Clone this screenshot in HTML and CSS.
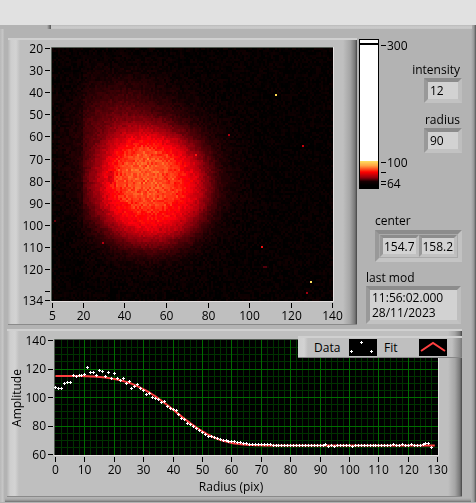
FILE: index.html
```html
<!DOCTYPE html>
<html lang="en">
<head>
<meta charset="utf-8">
<title>Beam profile</title>
<link rel="stylesheet" href="styles.css">
</head>
<body>
<header class="titlebar"></header>
<main class="window">
  <div class="tabs"><span class="tab"></span><span class="tab-edge"></span></div>
  <div class="upper">
    <section class="panel" aria-label="Intensity graph">
      <svg class="graph" id="map" viewBox="0 2 349 284">
        <foreignObject x="44" y="10" width="281" height="253"><canvas id="heat" class="heat" width="136" height="115"></canvas></foreignObject>
        <path class="frame-dark" d="M43.500 263V9.500H325"/>
        <path class="frame-light" d="M43 263.500H325.500V9"/>
      </svg>
    </section>
    <div class="side">
      <div class="side-top">
        <svg class="ramp" viewBox="0 0 48 152" width="48" height="152">
          <defs>
            <linearGradient id="rampfill" x1="0" y1="0" x2="0" y2="1">
              <stop offset="0" stop-color="#ffe060"/>
              <stop offset=".2" stop-color="#ffa040"/>
              <stop offset=".36" stop-color="#ff4018"/>
              <stop offset=".46" stop-color="#ff0000"/>
              <stop offset=".68" stop-color="#98000c"/>
              <stop offset=".85" stop-color="#180002"/>
              <stop offset="1" stop-color="#000"/>
            </linearGradient>
          </defs>
          <rect width="20" height="150" y="1"/>
          <rect x="1" y="2" width="18" height="122" fill="#fff"/>
          <rect x="1" y="5" width="18" height="2"/>
          <rect x="1" y="123" width="18" height="24" fill="url(#rampfill)"/>
          <path class="tick" d="M22 7.500h5M22 124.500h5M22 134.500h5M22 143.500h5M22 146.500h5"/>
          <text x="28" y="12">300</text>
          <text x="28" y="129">100</text>
          <text x="28" y="150">64</text>
        </svg>
        <div class="fields">
          <div class="field"><label for="intensity">intensity</label><input class="box small" id="intensity" value="12" readonly></div>
          <div class="field"><label for="radius">radius</label><input class="box small" id="radius" value="90" readonly></div>
        </div>
      </div>
      <div class="group center">
        <label for="cx">center</label>
        <div class="pair">
          <input class="box coord" id="cx" value="154.78" readonly>
          <input class="box coord" id="cy" aria-label="center y" value="158.2" readonly>
        </div>
      </div>
      <div class="group modified">
        <label for="mod">last mod</label>
        <textarea class="box stamp" id="mod" rows="2" readonly>11:56:02.000
28/11/2023</textarea>
      </div>
    </div>
  </div>
  <section class="panel lower" aria-label="Radial profile">
    <svg class="graph" id="profile" viewBox="0 0 455 165"></svg>
    <div class="legend">
      <span>Data</span>
      <svg width="28" height="17" viewBox="0 0 28 17"><rect width="28" height="17"/><path class="dot" d="M11 3.500h3M12.500 2v3M1 12.500h3M2.500 11v3M21 12.500h3M22.500 11v3"/></svg>
      <span class="fit-name">Fit</span>
      <svg width="28" height="17" viewBox="0 0 28 17"><rect width="28" height="17"/><path class="fit" d="M2 12L14 4l12 8"/></svg>
    </div>
  </section>
</main>
<script src="plots.js"></script>
</body>
</html>
```

FILE: styles.css
```css
* { box-sizing: border-box; }

body {
  margin: 0;
  background: #b3b3b3;
  color: #000;
  font: 12px/15px "Open Sans", "Noto Sans", sans-serif;
}

.titlebar { height: 25px; background: #e1e1e1; }

.window {
  padding: 0 14px 5px 7px;
  background:
    linear-gradient(to right, #b8b8b8, #c8c8c8 3px, #b3b3b3 4px) left / 5px 100% no-repeat,
    linear-gradient(to right, #b3b3b3, #989898 3px, #555 5px) right / 5px 100% no-repeat,
    linear-gradient(#b3b3b3, #a0a0a0 2px, #707070 4px) bottom / 100% 4px no-repeat,
    #b3b3b3;
}

.tabs { display: flex; height: 13px; margin: 0 -10px 0 -7px; }
.tab { width: 51px; height: 4px; background: linear-gradient(to left, #555, #b3b3b3 4px); }
.tab-edge { flex: 1; height: 4px; background: linear-gradient(#bababa, #cbcbcb 2px, #c4c4c4); }

.upper { display: flex; gap: 2px; margin-left: 1px; }

.panel {
  flex: 1;
  min-width: 0;
  border-top: 2px solid #d0d0d0;
  border-bottom: 1px solid #8a8a8a;
  background: linear-gradient(to right, #b6b6b6, #cecece 3px, #d3d3d3 8px, #bfbfbf 12px, #bfbfbf calc(100% - 14px), #a5a5a5 calc(100% - 7px), #777 calc(100% - 2px), #444);
}

.graph { display: block; width: 100%; height: auto; }
.heat { display: block; width: 281px; height: 253px; image-rendering: pixelated; }

svg text { font-size: 12px; fill: #000; }
.tick { stroke: #000; fill: none; }
.frame-dark { stroke: #555d55; fill: none; }
.frame-light { stroke: #e4e0e0; fill: none; }
.minor { stroke: #003200; fill: none; }
.major { stroke: #006c00; fill: none; }
.fit { stroke: #ff4040; stroke-width: 2; fill: none; }
.dot { stroke: #fff; fill: none; }
.mid { text-anchor: middle; }
.end { text-anchor: end; }

.side { width: 103px; }
.side-top { display: flex; justify-content: space-between; }
.ramp { display: block; flex: none; }

.fields { display: flex; flex-direction: column; gap: 9px; padding-top: 24px; }
.field { display: flex; flex-direction: column; align-items: flex-end; gap: 1px; }
label { display: block; }
.field label { padding-right: 2px; }

.box {
  display: block;
  margin: 0;
  border: 4px solid;
  border-color: #8c8c8c #bebebe #c2c2c2 #999;
  border-radius: 0;
  background: #d2d2d2;
  color: #000;
  font: 12px/15px "Open Sans", "Noto Sans", sans-serif;
  outline: 0;
}
.small { width: 38px; height: 25px; padding: 0 2px; }

.center { padding: 23px 0 0 16px; }
.pair {
  display: flex;
  margin-top: 2px;
  padding: 1px;
  border: 4px solid;
  border-color: #8c8c8c #c2c2c2 #c4c4c4 #999;
  background: #aaa;
}
.coord { flex: 1; min-width: 0; width: 0; height: 22px; padding: 0 1px; border-width: 3px; }

.modified { padding: 8px 1px 0 7px; }
.stamp { width: 100%; height: 38px; margin-top: 1px; padding: 0 2px; resize: none; overflow: hidden; }

.lower { position: relative; margin-top: 4px; }

.legend {
  position: absolute;
  top: 5px;
  right: 0;
  display: flex;
  align-items: center;
  width: 164px;
  height: 22px;
  padding-left: 16px;
  border-top: 2px solid #d0d0d0;
  border-bottom: 1px solid #888;
  background: linear-gradient(to right, #cecece, #d3d3d3 6px, #bfbfbf 10px, #bfbfbf calc(100% - 10px), #8c8c8c calc(100% - 2px), #777);
}
.legend span { width: 35px; }
.legend .fit-name { margin-left: 7px; }
```

FILE: plots.js
```javascript
var SVG = 'http://www.w3.org/2000/svg';

function add(parent, name, attrs, text) {
  var el = document.createElementNS(SVG, name);
  for (var key in attrs) el.setAttribute(key, attrs[key]);
  if (text !== undefined) el.textContent = text;
  parent.appendChild(el);
  return el;
}

var seed = 7;
function random() {
  seed = (seed * 16807) % 2147483647;
  return seed / 2147483647;
}

// Axes of the intensity graph
var map = document.getElementById('map');
for (var v = 20; v <= 130; v += 10) {
  var ty = Math.round(10 + (v - 20) * 2.21) - 0.5;
  add(map, 'path', { 'class': 'tick', d: 'M37 ' + (ty + 1) + 'h5' });
  if (v < 130) add(map, 'text', { 'class': 'end', x: 35, y: ty + 5 }, v);
}
add(map, 'path', { 'class': 'tick', d: 'M37 262.5h5' });
add(map, 'text', { 'class': 'end', x: 35, y: 267 }, 134);
[5, 20, 40, 60, 80, 100, 120, 140].forEach(function (n) {
  var tx = Math.floor(44 + (n - 5) * 2.08) + 0.5;
  add(map, 'path', { 'class': 'tick', d: 'M' + tx + ' 265v5' });
  add(map, 'text', { 'class': 'mid', x: tx, y: 282 }, n);
});

// Intensity values: a flat-topped core with a wider halo
function bump(x, y, cx, cy, size, power) {
  return Math.exp(-Math.pow(Math.hypot(x - cx, y - cy) / size, power));
}
var context = document.getElementById('heat').getContext('2d');
var image = context.createImageData(136, 115);
for (var row = 0; row < 115; row++) {
  for (var col = 0; col < 136; col++) {
    var x = 52 + col * 2.07, y = 48 + row * 2.2;
    var glow = 0.7 * bump(x, y, 150, 187, 58, 4.5)
      + 0.56 * bump(x, y, 147, 177, 61, 2.3)
      + 0.26 * bump(x, y, 114, 122, 42, 2);
    if (x < 81) glow *= 0.6;
    if (Math.hypot(x - 110, (y - 176) * 0.6) < 4) glow *= 0.82;
    var level = glow * (0.91 + random() * 0.18) + 0.02 + (random() - 0.5) * 0.1;
    if (glow > 1.1) level += (row + col) % 2 * 0.05;
    level = Math.max(0, level);
    var at = (row * 136 + col) * 4;
    image.data[at] = Math.min(255, level * 255);
    image.data[at + 1] = level > 1.04 ? Math.min(130, (level - 1.04) * 290) : 0;
    image.data[at + 2] = level > 1.04 ? Math.min(45, (level - 1.04) * 110) : Math.min(12, level * 20);
    image.data[at + 3] = 255;
  }
}
context.putImageData(image, 0, 0);
[[108, 21, 1, 1, '#ffd850'], [125, 106, 1, 1, '#ffe060'], [85, 39, 1, 1, '#a80010'],
 [121, 44, 1, 1, '#c8000c'], [69, 48, 1, 1, '#ff1010'], [101, 90, 1, 1, '#f01010'],
 [102, 99, 2, 1, '#50000c'], [123, 111, 1, 1, '#a00010'], [24, 88, 1, 1, '#b00010'],
 [1, 78, 1, 1, '#60000c'], [46, 50, 1, 1, '#ff9030']].forEach(function (s) {
  context.fillStyle = s[4];
  context.fillRect(s[0], s[1], s[2], s[3]);
});

// Radial profile
var profile = document.getElementById('profile');
function px(r) { return 48.5 + r * 2.94; }
function py(a) { return 9.5 + (140 - a) * 1.425; }
function snap(n) { return Math.floor(n) + 0.5; }

add(profile, 'rect', { x: 48, y: 9, width: 383, height: 115 });
var minor = '', major = '';
for (var r = 2; r < 130; r += 2) {
  if (r % 10) minor += 'M' + snap(px(r)) + ' 9V124';
  else major += 'M' + snap(px(r)) + ' 9V124';
}
for (var a = 65; a < 140; a += 5) {
  if (a % 20) minor += 'M48 ' + snap(py(a)) + 'H431';
  else major += 'M48 ' + snap(py(a)) + 'H431';
}
add(profile, 'path', { 'class': 'minor', d: minor });
add(profile, 'path', { 'class': 'major', d: major });
add(profile, 'path', { 'class': 'frame-dark', d: 'M47.5 124V8.500H431' });
add(profile, 'path', { 'class': 'frame-light', d: 'M47 124.500H431.500V8' });

for (a = 60; a <= 140; a += 20) {
  add(profile, 'path', { 'class': 'tick', d: 'M41 ' + snap(py(a)) + 'h5' });
  add(profile, 'text', { 'class': 'end', x: 39, y: Math.round(py(a)) + 4 }, a);
}
for (r = 0; r <= 130; r += 10) {
  add(profile, 'path', { 'class': 'tick', d: 'M' + snap(px(r)) + ' 126v5' });
  add(profile, 'text', { 'class': 'mid', x: snap(px(r)), y: 143 }, r);
}
add(profile, 'text', { 'class': 'mid', x: 224, y: 160 }, 'Radius (pix)');
add(profile, 'text', { 'class': 'mid', transform: 'translate(14 67) rotate(-90)' }, 'Amplitude');

function model(r) { return 66.3 + 48.8 * Math.exp(-Math.pow(r / 44.4, 3.95)); }
var line = '';
for (r = 0; r <= 129; r++) line += (r ? 'L' : 'M') + px(r) + ' ' + py(model(r));
add(profile, 'path', { 'class': 'fit', d: line });

var samples = [107.1, 106.4, 106.4, 109.9, 110.6, 110.6, 115.5, 114.8, 115.5, 115.5, 116.2,
  121.1, 117.6, 117.6, 115.5, 119, 118.3, 114.8, 117.6, 113.4, 116.9, 113.4, 112, 113.4,
  109.9, 111.3, 106.4, 107.8, 109.2, 106.4, 105, 102.2, 103, 100.1, 99.4, 98.7, 96.6, 97.3,
  93.8, 92.4, 91.5, 90.8, 88.2, 85.6, 84.7, 81.9, 81.2, 79.8, 78.4, 77, 75.6, 74.2, 72.8,
  72.8, 72.1, 71.3, 70.7, 70, 69.8, 69.3, 69.3, 69.3, 68.6, 68.6, 68, 68];
var late = { 92: 67.1, 93: 65.6, 95: 65.6, 101: 65.6, 115: 67.1, 118: 67.1, 121: 67.1,
  125: 67.1, 126: 67.8, 127: 67.8, 128: 65 };
var dots = '';
for (r = 0; r <= 128; r++) {
  var value = r < samples.length ? samples[r] : late[r] || (r < 74 ? 67.1 : 66.3);
  var dx = snap(px(r)), dy = snap(py(value));
  dots += 'M' + (dx - 1.5) + ' ' + dy + 'h3M' + dx + ' ' + (dy - 1.5) + 'v3';
}
add(profile, 'path', { 'class': 'dot', d: dots });
```
